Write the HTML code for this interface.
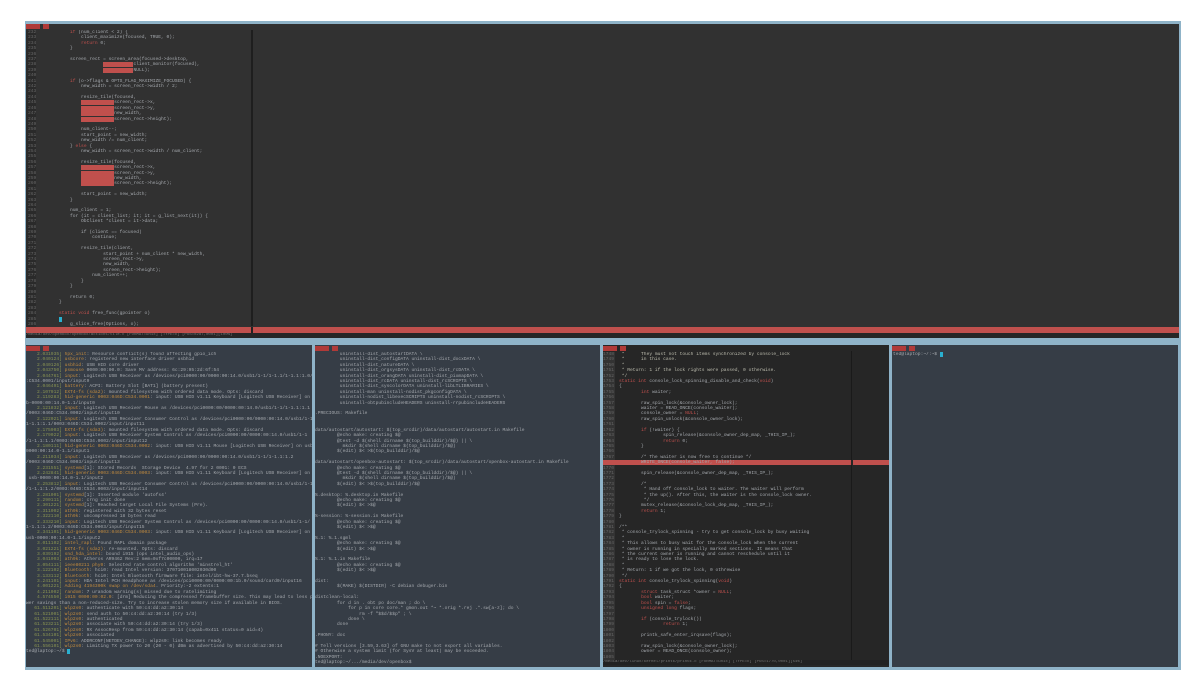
<!DOCTYPE html>
<html><head><meta charset="utf-8"><style>
html,body{margin:0;padding:0;background:#fff;width:1200px;height:700px;overflow:hidden}
.scr{position:absolute;left:25px;top:21px;width:1156px;height:649px;background:#8fb3c8}
.p{position:absolute;overflow:hidden}
pre{margin:0;font-family:"Liberation Mono",monospace;font-size:4.6px;line-height:5.4px;color:#a4a8ad;white-space:pre}
.ln{color:#666}.k{color:#c0504d}.g{color:#8a9452}.o{color:#c08a3e}.c{color:#bcbcae}
.r{background:#c0504d;color:#c0504d}
.tab{position:absolute;height:5px;background:#b03a38}
</style></head><body>
<div class="scr">
 <div class="p" style="left:1px;top:3px;width:1153px;height:313px;background:#313131"></div>
 <div class="tab" style="left:1px;top:3px;width:14px"></div><div class="tab" style="left:18px;top:3px;width:6px"></div>
 <div class="p" style="left:1px;top:9px;width:10px;height:305px;background:#2a2a2a"></div>
 <div class="p" style="left:226px;top:9px;width:2px;height:296px;background:#1e1e1e"></div>
 <div class="p" style="left:3px;top:9px;width:222px;height:300px"><pre><span class="ln">232
233
234
235
236
237
238
239
240
241
242
243
244
245
246
247
248
249
250
251
252
253
254
255
256
257
258
259
260
261
262
263
264
265
266
267
268
269
270
271
272
273
274
275
276
277
278
279
280
281
282
283
284
285
286</span></pre></div>
 <div class="p" style="left:34px;top:9px;width:190px;height:300px"><pre>    <span class="k">if</span> (num_client &lt; 2) {
        client_maximize(focused, TRUE, 0);
        <span class="k">return</span> 0;
    }

    screen_rect = screen_area(focused-&gt;desktop,
                <span class="r">xxxxxxxxxxx</span>client_monitor(focused),
                <span class="r">xxxxxxxxxxx</span>NULL);

    <span class="k">if</span> (o-&gt;flags &amp; OPTS_FLAG_MAXIMIZE_FOCUSED) {
        new_width = screen_rect-&gt;width / 2;

        resize_tile(focused,
        <span class="r">xxxxxxxxxxxx</span>screen_rect-&gt;x,
        <span class="r">xxxxxxxxxxxx</span>screen_rect-&gt;y,
        <span class="r">xxxxxxxxxxxx</span>new_width,
        <span class="r">xxxxxxxxxxxx</span>screen_rect-&gt;height);

        num_client--;
        start_point = new_width;
        new_width /= num_client;
    } <span class="k">else</span> {
        new_width = screen_rect-&gt;width / num_client;

        resize_tile(focused,
        <span class="r">xxxxxxxxxxxx</span>screen_rect-&gt;x,
        <span class="r">xxxxxxxxxxxx</span>screen_rect-&gt;y,
        <span class="r">xxxxxxxxxxxx</span>new_width,
        <span class="r">xxxxxxxxxxxx</span>screen_rect-&gt;height);

        start_point = new_width;
    }

    num_client = 1;
    for (it = client_list; it; it = g_list_next(it)) {
        ObClient *client = it-&gt;data;

        if (client == focused)
            continue;

        resize_tile(client,
                start_point + num_client * new_width,
                screen_rect-&gt;y,
                new_width,
                screen_rect-&gt;height);
            num_client++;
        }
    }

    return 0;
}

<span class="k">static void</span> free_func(gpointer o)
<span style="background:#2ab0d0">&nbsp;</span>
    g_slice_free(Options, o);</pre></div>
 <div class="p" style="left:1px;top:306px;width:1153px;height:6px;background:#c0504d"></div>
 <div class="p" style="left:226px;top:306px;width:2px;height:6px;background:#222"></div>
 <div class="p" style="left:1px;top:312px;width:1153px;height:5px;background:#262626"><pre style="font-size:4px;line-height:5px;color:#777">/media/dev/openbox/openbox/actions/tile.c [FORMAT=unix] [TYPE=c] [POS=0287,0001][100%]</pre></div>
 <div class="p" style="left:1px;top:324px;width:286px;height:322px;background:#363d46"></div>
 <div class="p" style="left:290px;top:324px;width:285px;height:322px;background:#363d46"></div>
 <div class="p" style="left:578px;top:324px;width:286px;height:322px;background:#262626"></div>
 <div class="p" style="left:826px;top:330px;width:1px;height:310px;background:#1a1a1a"></div>
 <div class="p" style="left:867px;top:324px;width:286px;height:322px;background:#363d46"></div>
 <div class="tab" style="left:1px;top:325px;width:14px"></div><div class="tab" style="left:18px;top:325px;width:6px"></div>
 <div class="tab" style="left:290px;top:325px;width:14px"></div><div class="tab" style="left:307px;top:325px;width:6px"></div>
 <div class="tab" style="left:578px;top:325px;width:14px"></div><div class="tab" style="left:595px;top:325px;width:6px"></div>
 <div class="tab" style="left:867px;top:325px;width:14px"></div><div class="tab" style="left:884px;top:325px;width:6px"></div>
 <div class="p" style="left:1px;top:331px;width:286px;height:314px"><pre><span class="g">    2.031935]</span> <span class="o">hpx_init</span>: Resource conflict(s) found affecting gpio_ich
<span class="g">    2.040124]</span> <span class="o">usbcore</span>: registered new interface driver usbhid
<span class="g">    2.040126]</span> <span class="o">usbhid</span>: USB HID core driver
<span class="g">    2.043750]</span> <span class="o">psmouse</span> 0000:00:00.0: Save MV address: 6c:29:95:2d:6f:54
<span class="g">    2.044761]</span> <span class="o">input</span>: Logitech USB Receiver as /devices/pci0000:00/0000:00:14.0/usb1/1-1/1-1.1/1-1.1:1.0/0003:046D
:C534.0001/input/input9
<span class="g">    2.046491]</span> <span class="o">battery</span>: ACPI: Battery Slot [BAT1] (battery present)
<span class="g">    2.107912]</span> <span class="o">EXT4-fs (sda2)</span>: mounted filesystem with ordered data mode. Opts: discard
<span class="g">    2.119283]</span> <span class="o">hid-generic 0003:046D:C534.0001</span>: input: USB HID v1.11 Keyboard [Logitech USB Receiver] on us
b-0000:00:14.0-1.1/input0
<span class="g">    2.121832]</span> <span class="o">input</span>: Logitech USB Receiver Mouse as /devices/pci0000:00/0000:00:14.0/usb1/1-1/1-1.1:1.1
/0003:046D:C534.0002/input/input10
<span class="g">    2.122021]</span> <span class="o">input</span>: Logitech USB Receiver Consumer Control as /devices/pci0000:00/0000:00:14.0/usb1/1-1/
1-1.1:1.1/0003:046D:C534.0002/input/input11
<span class="g">    2.175903]</span> <span class="o">EXT4-fs (sda3)</span>: mounted filesystem with ordered data mode. Opts: discard
<span class="g">    2.179022]</span> <span class="o">input</span>: Logitech USB Receiver System Control as /devices/pci0000:00/0000:00:14.0/usb1/1-1
/1-1.1:1.1/0003:046D:C534.0002/input/input12
<span class="g">    2.180111]</span> <span class="o">hid-generic 0003:046D:C534.0002</span>: input: USB HID v1.11 Mouse [Logitech USB Receiver] on usb-
0000:00:14.0-1.1/input1
<span class="g">    2.211034]</span> <span class="o">input</span>: Logitech USB Receiver as /devices/pci0000:00/0000:00:14.0/usb1/1-1/1-1.1:1.2
/0003:046D:C534.0003/input/input13
<span class="g">    2.231551]</span> <span class="o">systemd</span>[1]: Stored Records  Storage Device  4.97 for 2 0001: 0 ECS
<span class="g">    2.242841]</span> <span class="o">hid-generic 0003:046D:C534.0003</span>: input: USB HID v1.11 Keyboard [Logitech USB Receiver] on
 usb-0000:00:14.0-1.1/input2
<span class="g">    2.253812]</span> <span class="o">input</span>: Logitech USB Receiver Consumer Control as /devices/pci0000:00/0000:00:14.0/usb1/1-1
/1-1.1:1.2/0003:046D:C534.0003/input/input14
<span class="g">    2.281001]</span> <span class="o">systemd</span>[1]: Inserted module 'autofs4'
<span class="g">    2.290111]</span> <span class="o">random</span>: crng init done
<span class="g">    2.301221]</span> <span class="o">systemd</span>[1]: Reached target Local File Systems (Pre).
<span class="g">    2.311002]</span> <span class="o">ath9k</span>: registered with 32 bytes reset
<span class="g">    2.322110]</span> <span class="o">ath9k</span>: uncompressed 18 bytes read
<span class="g">    2.333210]</span> <span class="o">input</span>: Logitech USB Receiver System Control as /devices/pci0000:00/0000:00:14.0/usb1/1-1/
1-1.1:1.2/0003:046D:C534.0003/input/input15
<span class="g">    2.341101]</span> <span class="o">hid-generic 0003:046D:C534.0003</span>: input: USB HID v1.11 Keyboard [Logitech USB Receiver] on
usb-0000:00:14.0-1.1/input2
<span class="g">    3.011102]</span> <span class="o">intel_rapl</span>: Found RAPL domain package
<span class="g">    3.021221]</span> <span class="o">EXT4-fs (sda2)</span>: re-mounted. Opts: discard
<span class="g">    3.039192]</span> <span class="o">snd_hda_intel</span>: bound i915 (ops intel_audio_ops)
<span class="g">    3.041003]</span> <span class="o">ath9k</span>: Atheros AR9462 Rev:2 mem=0xf7c00000, irq=17
<span class="g">    3.054111]</span> <span class="o">ieee80211 phy0</span>: Selected rate control algorithm 'minstrel_ht'
<span class="g">    3.122102]</span> <span class="o">Bluetooth</span>: hci0: read Intel version: 370710018002030d00
<span class="g">    3.133112]</span> <span class="o">Bluetooth</span>: hci0: Intel Bluetooth firmware file: intel/ibt-hw-37.7.bseq
<span class="g">    3.241101]</span> <span class="o">input</span>: HDA Intel PCH Headphone as /devices/pci0000:00/0000:00:1b.0/sound/card0/input16
<span class="g">    4.001221]</span> <span class="o">Adding 4194300k swap on /dev/sda4</span>. Priority:-2 extents:1
<span class="g">    4.211002]</span> <span class="o">random</span>: 7 urandom warning(s) missed due to ratelimiting
<span class="g">    4.574550]</span> <span class="o">i915 0000:00:02.0</span>: [drm] Reducing the compressed framebuffer size. This may lead to less po
wer savings than a non-reduced-size. Try to increase stolen memory size if available in BIOS.
<span class="g">   61.511201]</span> <span class="o">wlp2s0</span>: authenticate with 50:c4:dd:a2:30:14
<span class="g">   61.521001]</span> <span class="o">wlp2s0</span>: send auth to 50:c4:dd:a2:30:14 (try 1/3)
<span class="g">   61.522111]</span> <span class="o">wlp2s0</span>: authenticated
<span class="g">   61.523211]</span> <span class="o">wlp2s0</span>: associate with 50:c4:dd:a2:30:14 (try 1/3)
<span class="g">   61.526701]</span> <span class="o">wlp2s0</span>: RX AssocResp from 50:c4:dd:a2:30:14 (capab=0x411 status=0 aid=4)
<span class="g">   61.534101]</span> <span class="o">wlp2s0</span>: associated
<span class="g">   61.545001]</span> <span class="o">IPv6</span>: ADDRCONF(NETDEV_CHANGE): wlp2s0: link becomes ready
<span class="g">   61.556101]</span> <span class="o">wlp2s0</span>: Limiting TX power to 20 (20 - 0) dBm as advertised by 50:c4:dd:a2:30:14
ted@laptop:~/$ <span style="background:#2ab0d0">&nbsp;</span></pre></div>
 <div class="p" style="left:290px;top:331px;width:285px;height:314px"><pre>         uninstall-dist_autostartDATA \
         uninstall-dist_configDATA uninstall-dist_docxDATA \
         uninstall-dist_natureDATA \
         uninstall-dist_orgsysDATA uninstall-dist_rcDATA \
         uninstall-dist_orangDATA uninstall-dist_pixmapDATA \
         uninstall-dist_rcDATA uninstall-dist_rcSCRIPTS \
         uninstall-dist_syscolorDATA uninstall-libLTLIBRARIES \
         uninstall-man uninstall-nodist_pkgconfigDATA \
         uninstall-nodist_libexecSCRIPTS uninstall-nodist_rcSCRIPTS \
         uninstall-obtpubincludeHEADERS uninstall-rrpubincludeHEADERS

.PRECIOUS: Makefile


data/autostart/autostart: $(top_srcdir)/data/autostart/autostart.in Makefile
        @echo make: creating $@
        @test -d $(shell dirname $(top_builddir)/$@) || \
          mkdir $(shell dirname $(top_builddir)/$@)
        $(edit) $&lt; &gt;$(top_builddir)/$@

data/autostart/openbox-autostart: $(top_srcdir)/data/autostart/openbox-autostart.in Makefile
        @echo make: creating $@
        @test -d $(shell dirname $(top_builddir)/$@) || \
          mkdir $(shell dirname $(top_builddir)/$@)
        $(edit) $&lt; &gt;$(top_builddir)/$@

%.desktop: %.desktop.in Makefile
        @echo make: creating $@
        $(edit) $&lt; &gt;$@

%-session: %-session.in Makefile
        @echo make: creating $@
        $(edit) $&lt; &gt;$@

%.1: %.1.sgml
        @echo make: creating $@
        $(edit) $&lt; &gt;$@

%.1: %.1.in Makefile
        @echo make: creating $@
        $(edit) $&lt; &gt;$@

dist:
        $(MAKE) $(DISTDIR) -C debian debuger.bin

distclean-local:
        for d in . obt po doc/man ; do \
            for p in core core.* gmon.out *~ *.orig *.rej .*.sw[a-z]; do \
                rm -f "$$d/$$p" ; \
            done \
        done

.PHONY: doc

# Tell versions [3.59,3.63] of GNU make to not export all variables.
# Otherwise a system limit (for SysV at least) may be exceeded.
.NOEXPORT:
ted@laptop:~/.../media/dev/openbox$</pre></div>
 <div class="p" style="left:578px;top:331px;width:12px;height:308px;background:#333"></div>
 <div class="p" style="left:578px;top:331px;width:248px;height:308px"><pre><span class="ln">1748
1749
1750
1751
1752
1753
1754
1755
1756
1757
1758
1759
1760
1761
1762
1763
1764
1765
1766
1767</span>
<span class="ln">1769</span>
<span class="ln">1770
1771
1772
1773
1774
1775
1776
1777
1778
1779
1780
1781
1782
1783
1784
1785
1786
1787
1788
1789
1790
1791
1792
1793
1794
1795
1796
1797
1798
1799
1800
1801
1802
1803
1804
1805
1806
1807
1808
1809
1810</span></pre></div>
 <div class="p" style="left:578px;top:439px;width:286px;height:5px;background:#c0504d"></div>
 <div class="p" style="left:826px;top:439px;width:2px;height:5px;background:#262626"></div>
 <div class="p" style="left:594px;top:331px;width:232px;height:308px"><pre><span class="c"> *      They must not touch items synchronized by console_lock
 *      in this case.
 *
 * Return: 1 if the lock rights were passed, 0 otherwise.
 */</span>
<span class="k">static int</span> console_lock_spinning_disable_and_check(<span class="k">void</span>)
{
        <span class="k">int</span> waiter;

        raw_spin_lock(&amp;console_owner_lock);
        waiter = READ_ONCE(console_waiter);
        console_owner = <span class="k">NULL</span>;
        raw_spin_unlock(&amp;console_owner_lock);

        <span class="k">if</span> (!waiter) {
                spin_release(&amp;console_owner_dep_map, _THIS_IP_);
                <span class="k">return</span> 0;
        }

        /* The waiter is now free to continue */
        WRITE_ONCE(console_waiter, false);

        spin_release(&amp;console_owner_dep_map, _THIS_IP_);

        /*
         * Hand off console_lock to waiter. The waiter will perform
         * the up(). After this, the waiter is the console_lock owner.
         */
        mutex_release(&amp;console_lock_dep_map, _THIS_IP_);
        <span class="k">return</span> 1;
}

/**
 * console_trylock_spinning - try to get console_lock by busy waiting
 *
 * This allows to busy wait for the console_lock when the current
 * owner is running in specially marked sections. It means that
 * the current owner is running and cannot reschedule until it
 * is ready to lose the lock.
 *
 * Return: 1 if we got the lock, 0 othrewise
 */
<span class="k">static int</span> console_trylock_spinning(<span class="k">void</span>)
{
        <span class="k">struct</span> task_struct *owner = <span class="k">NULL</span>;
        <span class="k">bool</span> waiter;
        <span class="k">bool</span> spin = <span class="k">false</span>;
        <span class="k">unsigned long</span> flags;

        <span class="k">if</span> (console_trylock())
                <span class="k">return</span> 1;

        printk_safe_enter_irqsave(flags);

        raw_spin_lock(&amp;console_owner_lock);
        owner = READ_ONCE(console_owner);</pre></div>
 <div class="p" style="left:578px;top:639px;width:286px;height:5px;background:#222"><pre style="font-size:4px;line-height:5px;color:#777">/media/dev/linux/kernel/printk/printk.c [FORMAT=unix] [TYPE=c] [POS=1770,0001][54%]</pre></div>
 <div class="p" style="left:868px;top:331px;width:280px;height:10px"><pre>ted@laptop:~/:~$ <span style="background:#2ab0d0">&nbsp;</span></pre></div>
</div>
</body></html>
